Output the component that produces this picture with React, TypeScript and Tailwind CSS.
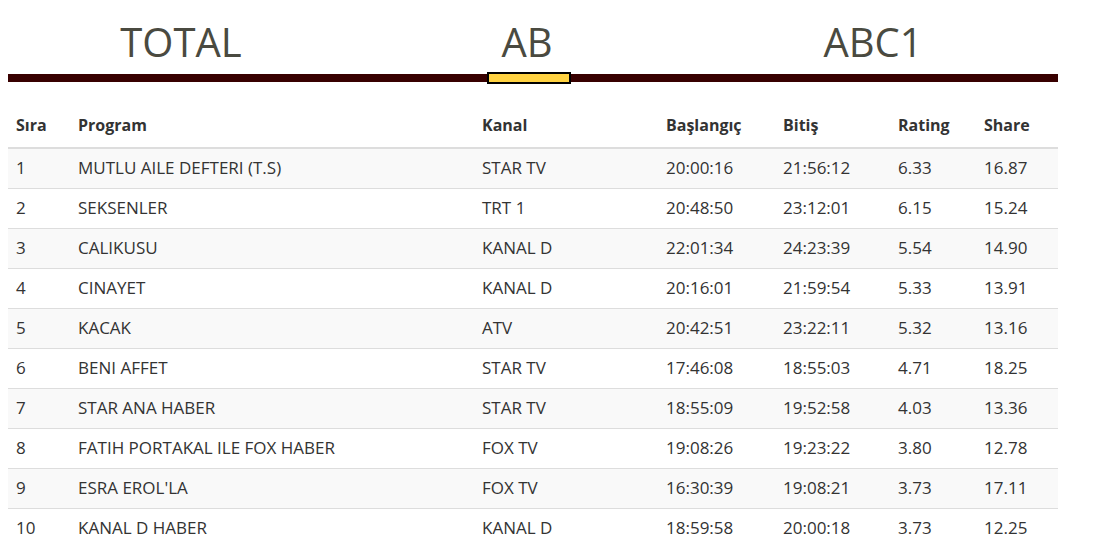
import React from 'react';

interface Row {
  sira: number;
  program: string;
  kanal: string;
  baslangic: string;
  bitis: string;
  rating: string;
  share: string;
}

const rows: Row[] = [
  { sira: 1, program: 'MUTLU AILE DEFTERI (T.S)', kanal: 'STAR TV', baslangic: '20:00:16', bitis: '21:56:12', rating: '6.33', share: '16.87' },
  { sira: 2, program: 'SEKSENLER', kanal: 'TRT 1', baslangic: '20:48:50', bitis: '23:12:01', rating: '6.15', share: '15.24' },
  { sira: 3, program: 'CALIKUSU', kanal: 'KANAL D', baslangic: '22:01:34', bitis: '24:23:39', rating: '5.54', share: '14.90' },
  { sira: 4, program: 'CINAYET', kanal: 'KANAL D', baslangic: '20:16:01', bitis: '21:59:54', rating: '5.33', share: '13.91' },
  { sira: 5, program: 'KACAK', kanal: 'ATV', baslangic: '20:42:51', bitis: '23:22:11', rating: '5.32', share: '13.16' },
  { sira: 6, program: 'BENI AFFET', kanal: 'STAR TV', baslangic: '17:46:08', bitis: '18:55:03', rating: '4.71', share: '18.25' },
  { sira: 7, program: 'STAR ANA HABER', kanal: 'STAR TV', baslangic: '18:55:09', bitis: '19:52:58', rating: '4.03', share: '13.36' },
  { sira: 8, program: 'FATIH PORTAKAL ILE FOX HABER', kanal: 'FOX TV', baslangic: '19:08:26', bitis: '19:23:22', rating: '3.80', share: '12.78' },
  { sira: 9, program: "ESRA EROL'LA", kanal: 'FOX TV', baslangic: '16:30:39', bitis: '19:08:21', rating: '3.73', share: '17.11' },
  { sira: 10, program: 'KANAL D HABER', kanal: 'KANAL D', baslangic: '18:59:58', bitis: '20:00:18', rating: '3.73', share: '12.25' },
];

const tabs = ['TOTAL', 'AB', 'ABC1'];

export default function App() {
  return (
    <div className="w-[1107px] h-[544px] overflow-hidden bg-white px-2 font-['Open_Sans',sans-serif] text-[#333]">
      {/* Tabs */}
      <div className="w-[1050px]">
        <div className="grid grid-cols-[346px_346px_346px] pt-[17px]">
          {tabs.map((t) => (
            <div key={t} className="flex flex-col items-center">
              <div className="text-[40px] leading-[50px] text-[#4a4a40]">{t}</div>
            </div>
          ))}
        </div>
        <div className="relative mt-[7px] h-[8px] bg-[#380000]">
          <div className="absolute left-[479px] top-[-2px] h-[12px] w-[84px] border-2 border-black bg-[#ffd241]" />
        </div>
      </div>

      {/* Table */}
      <table className="mt-[26px] w-[1050px] table-fixed border-collapse">
        <colgroup>
          <col className="w-[62px]" />
          <col className="w-[404px]" />
          <col className="w-[184px]" />
          <col className="w-[117px]" />
          <col className="w-[115px]" />
          <col className="w-[86px]" />
          <col className="w-[82px]" />
        </colgroup>
        <thead>
          <tr className="border-b-2 border-[#dddddd]">
            {['Sıra', 'Program', 'Kanal', 'Başlangıç', 'Bitiş', 'Rating', 'Share'].map((h) => (
              <th key={h} className="px-2 pt-[5px] pb-[10px] text-left text-[16px] leading-[24px] font-bold text-[#333]">
                {h}
              </th>
            ))}
          </tr>
        </thead>
        <tbody className="text-[17px] leading-[23px]">
          {rows.map((r, i) => (
            <tr key={r.sira} className={`border-t border-[#dddddd] ${i % 2 === 0 ? 'bg-[#f9f9f9]' : 'bg-white'}`}>
              <td className="px-2 pt-[7px] pb-[9px]">{r.sira}</td>
              <td className="px-2 pt-[7px] pb-[9px]">{r.program}</td>
              <td className="px-2 pt-[7px] pb-[9px]">{r.kanal}</td>
              <td className="px-2 pt-[7px] pb-[9px]">{r.baslangic}</td>
              <td className="px-2 pt-[7px] pb-[9px]">{r.bitis}</td>
              <td className="px-2 pt-[7px] pb-[9px]">{r.rating}</td>
              <td className="px-2 pt-[7px] pb-[9px]">{r.share}</td>
            </tr>
          ))}
        </tbody>
      </table>
    </div>
  );
}
